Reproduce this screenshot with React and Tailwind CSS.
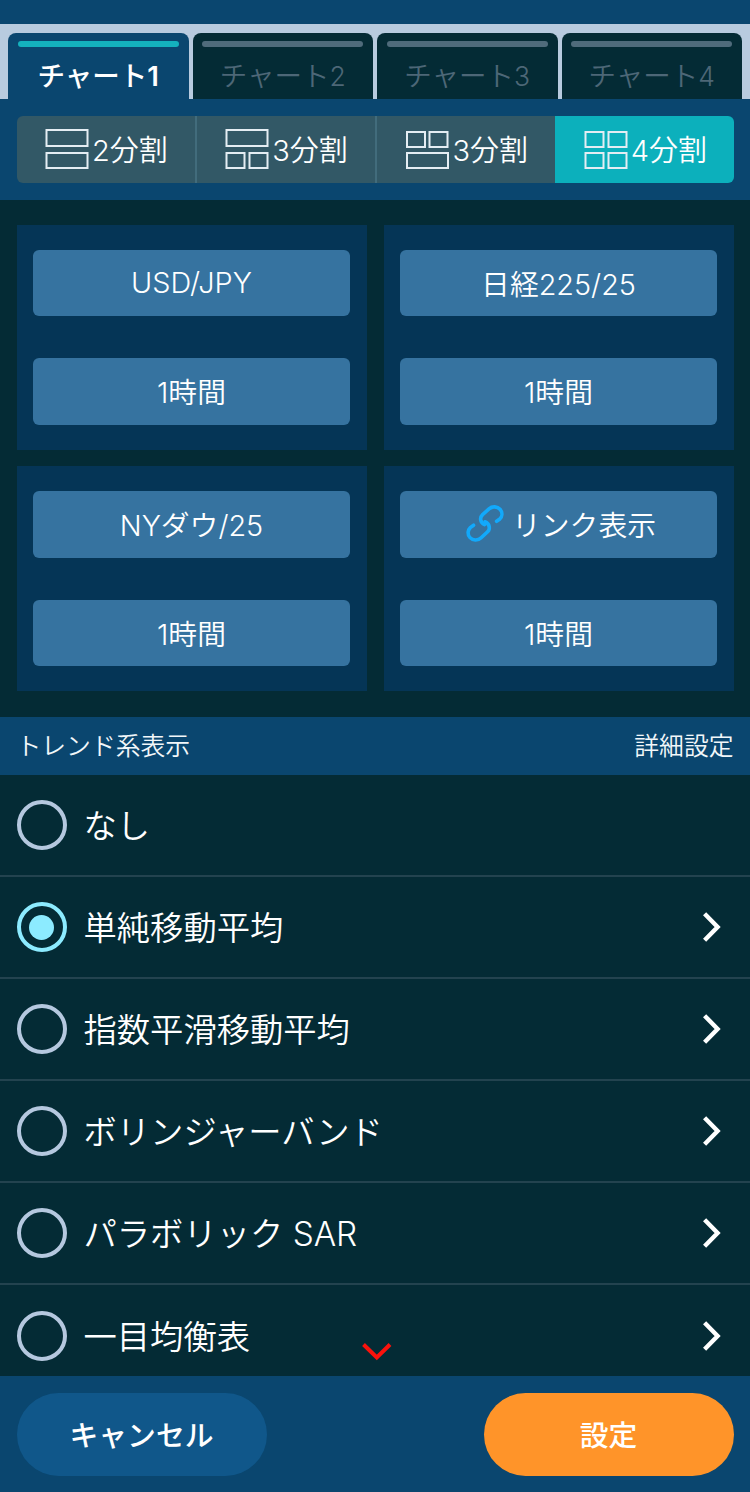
import React from "react";

const tabs = [
  ["チャート", "1"],
  ["チャート", "2"],
  ["チャート", "3"],
  ["チャート", "4"],
];

function Tab({ name, num, active }) {
  return (
    <div
      className={
        "flex h-full w-[180.5px] flex-col items-center rounded-t-lg pt-2 " +
        (active ? "bg-[#0a466f] font-medium text-white" : "bg-[#042b35] font-[350] text-[#4d6777]")
      }
    >
      <div className={"h-1.5 w-[161px] rounded-full " + (active ? "bg-[#14b1bd]" : "bg-[#4f6b7b]")} />
      <div className="mt-[9px] text-[27.5px] leading-10 whitespace-nowrap">
        {name}
        <span className={active ? "font-semibold" : "text-[26.5px]"}>{num}</span>
      </div>
    </div>
  );
}

const layouts = [
  { label: "2分割", boxes: [[1.5, 1, 41, 16], [1.5, 24, 41, 15]] },
  { label: "3分割", boxes: [[1.5, 1, 41, 16], [1.5, 24, 18, 15], [24.5, 24, 18, 15]] },
  { label: "3分割", boxes: [[1, 3, 18, 15], [23.5, 3, 18, 15], [1, 24, 41, 15]] },
  { label: "4分割", boxes: [[1.5, 3, 18, 15], [24.5, 3, 18, 15], [1.5, 24, 18, 15], [24.5, 24, 18, 15]] },
];

function Segment({ item, active, divider }) {
  return (
    <div
      className={
        "flex flex-1 items-center pl-[28.5px] text-white " +
        (active ? "bg-[#0cb0bc] " : "bg-[#325866] ") +
        (divider ? "border-r-2 border-[#426c7c]" : "border-r-0")
      }
    >
      <svg width="44" height="41" viewBox="0 0 44 41" fill="none" stroke="#e4edf3" strokeWidth="2" className="shrink-0">
        {item.boxes.map(([x, y, w, h], i) => (
          <rect key={i} x={x} y={y} width={w} height={h} />
        ))}
      </svg>
      <span className="ml-[3px] pt-1 text-[29px] leading-10 font-[350] whitespace-nowrap">{item.label}</span>
    </div>
  );
}

function LinkIcon() {
  return (
    <svg width="38" height="37" viewBox="0 0 38 37" fill="none" stroke="#12a9fb" strokeWidth="3.6" strokeLinecap="round" className="mr-2 -mt-1">
      <path d="M18.6 19.6 C14 17.5 13.5 12.5 16.6 9.6 L23 3.9 C26.5 0.8 31.5 1.5 34 4.3 C36.8 7.5 36.3 11.6 33.8 14 L30.6 16.3" />
      <path d="M18.9 16.8 C24.1 18.8 24.3 24.2 21.6 26.8 L15.2 32.7 C11.8 36 6.6 35.4 4 32.6 C1.2 29.5 1.6 25.2 4.3 22.6 L7.6 20.2" />
    </svg>
  );
}

function PickButton({ className = "pt-[3px]", children }) {
  return (
    <button className={"flex h-[66.5px] w-full items-center justify-center rounded-md bg-[#3673a0] text-[28.8px] font-[350] text-white " + className}>
      {children}
    </button>
  );
}

function Card({ top, children }) {
  return (
    <div className="flex h-[225px] flex-col gap-[42px] bg-[#053556] px-[16.5px] pt-[25px]">
      <PickButton className={top}>{children}</PickButton>
      <PickButton>1時間</PickButton>
    </div>
  );
}

const trends = ["なし", "単純移動平均", "指数平滑移動平均", "ボリンジャーバンド", "パラボリック SAR", "一目均衡表"];

function Row({ label, selected, arrow }) {
  return (
    <div className="flex h-[102.1px] shrink-0 items-center border-b-2 border-[#23434f] pr-[29.5px] pl-[16.5px]">
      <div
        className={
          "flex size-[50px] shrink-0 items-center justify-center rounded-full border-4 " +
          (selected ? "border-[#8cebff]" : "border-[#b5c8df]")
        }
      >
        {selected && <div className="size-[25px] rounded-full bg-[#8cebff]" />}
      </div>
      <span className="ml-[17px] flex-1 pt-0.5 text-[33.3px] leading-[50px] font-[350] whitespace-nowrap text-white">
        {label}
      </span>
      {arrow && (
        <svg width="18" height="30" viewBox="0 0 18 30" fill="none" stroke="#ffffff" strokeWidth="4.4">
          <path d="M1.6 1.7 L14.6 15 L1.6 28.3" />
        </svg>
      )}
    </div>
  );
}

export default function App() {
  return (
    <div className="relative flex h-[1492px] w-[750px] flex-col overflow-hidden bg-[#042b35] font-['Inter','Noto_Sans_CJK_JP',sans-serif]">
      <div className="h-6 shrink-0 bg-[#0a466f]" />
      <div className="flex h-[75px] shrink-0 gap-1 bg-[#b8cbdf] pt-[9px] pl-2">
        {tabs.map(([name, num], i) => (
          <Tab key={num} name={name} num={num} active={i === 0} />
        ))}
      </div>
      <div className="h-[100.5px] shrink-0 bg-[#0a466f] px-[16.5px] pt-[17px]">
        <div className="flex h-[66.5px] overflow-hidden rounded-md">
          {layouts.map((l, i) => (
            <Segment key={i} item={l} active={i === 3} divider={i < 2} />
          ))}
        </div>
      </div>
      <div className="grid h-[517px] shrink-0 grid-cols-2 content-start gap-x-[17px] gap-y-[16.5px] px-[16.5px] pt-[25px]">
        <Card top="pt-0">USD/JPY</Card>
        <Card top="pt-[3px]">日経225/25</Card>
        <Card top="pt-[3px]">NYダウ/25</Card>
        <Card top="pt-[3px] pl-[5px]">
          <LinkIcon />
          リンク表示
        </Card>
      </div>
      <div className="flex h-[58.5px] shrink-0 items-center justify-between bg-[#0a466f] px-[16.5px] pt-px text-[24.8px] font-[350] text-[#f2f7fa]">
        <span>トレンド系表示</span>
        <span>詳細設定</span>
      </div>
      <div className="flex min-h-0 flex-1 flex-col overflow-hidden">
        {trends.map((t, i) => (
          <Row key={t} label={t} selected={i === 1} arrow={i > 0} />
        ))}
      </div>
      <div className="flex h-[116px] shrink-0 justify-between bg-[#0a466f] px-[16.5px] pt-[16.5px] text-[28.8px] font-medium text-white">
        <button className="h-[83.5px] w-[250px] rounded-full bg-[#10578a] pt-[3px]">キャンセル</button>
        <button className="h-[83.5px] w-[250px] rounded-full bg-[#ff9429] pt-[3px]">設定</button>
      </div>
      <svg className="absolute top-[1341px] left-[361px]" width="32" height="22" viewBox="0 0 32 22" fill="none" stroke="#fa120c" strokeWidth="4">
        <path d="M2.5 3.5 L15.8 16.5 L29 3.5" />
      </svg>
    </div>
  );
}
